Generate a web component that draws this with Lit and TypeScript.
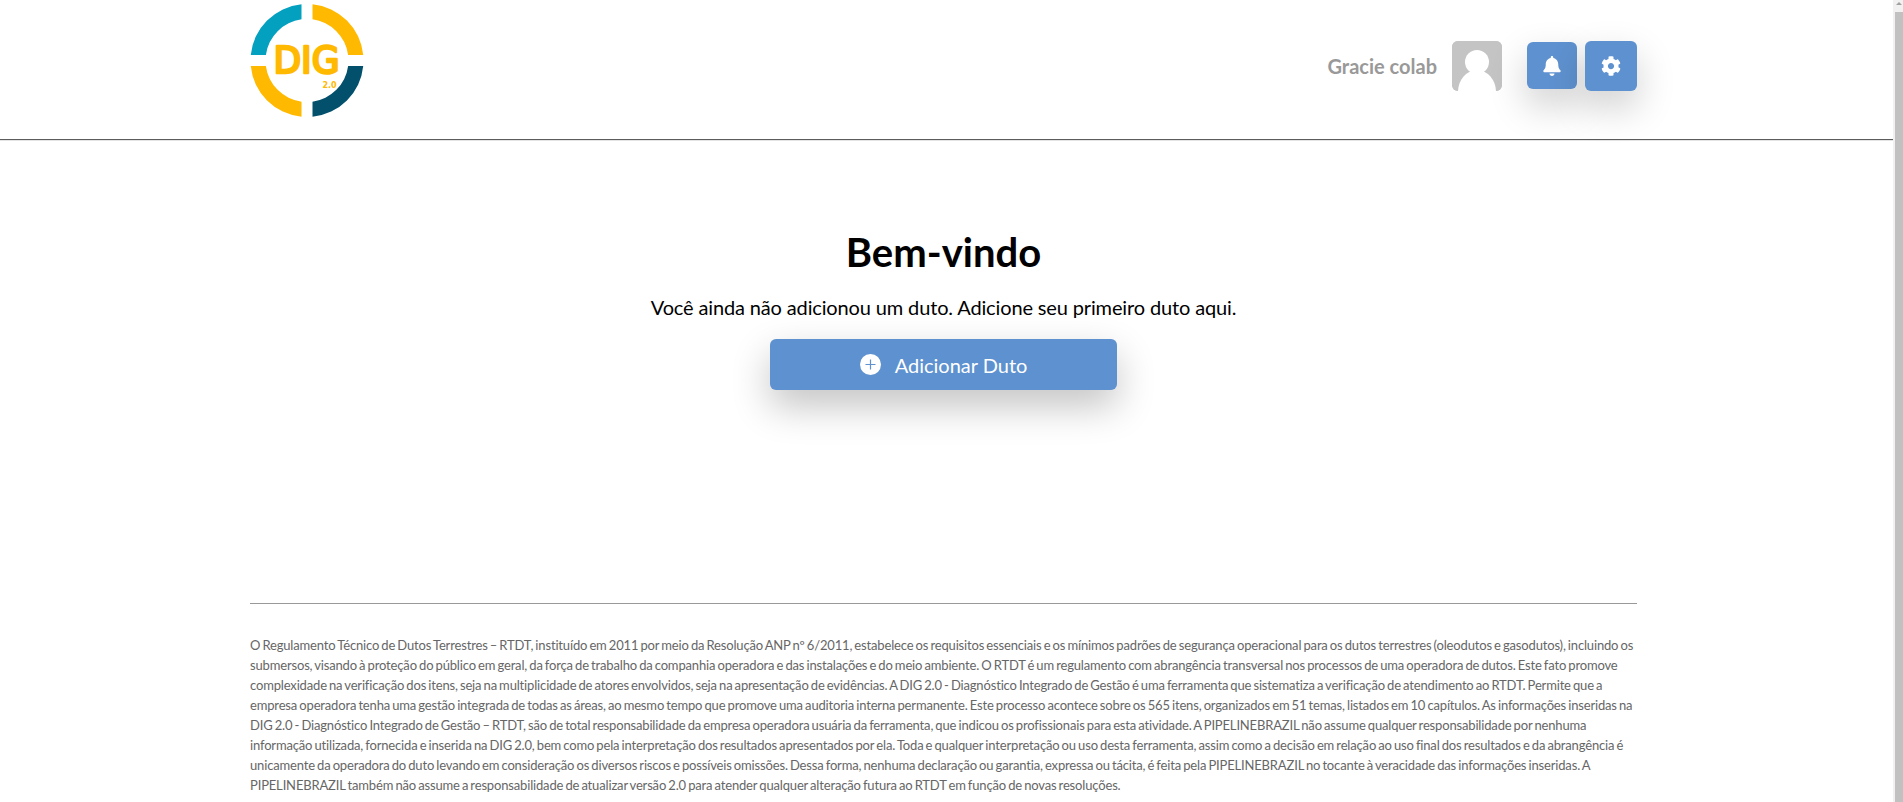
import { LitElement, html, css, svg } from "lit";
import { customElement } from "lit/decorators.js";

const TEXT = "O Regulamento Técnico de Dutos Terrestres – RTDT, instituído em 2011 por meio da Resolução ANP nº 6/2011, estabelece os requisitos essenciais e os mínimos padrões de segurança operacional para os dutos terrestres (oleodutos e gasodutos), incluindo os submersos, visando à proteção do público em geral, da força de trabalho da companhia operadora e das instalações e do meio ambiente. O RTDT é um regulamento com abrangência transversal nos processos de uma operadora de dutos. Este fato promove complexidade na verificação dos itens, seja na multiplicidade de atores envolvidos, seja na apresentação de evidências. A DIG 2.0 - Diagnóstico Integrado de Gestão é uma ferramenta que sistematiza a verificação de atendimento ao RTDT. Permite que a empresa operadora tenha uma gestão integrada de todas as áreas, ao mesmo tempo que promove uma auditoria interna permanente. Este processo acontece sobre os 565 itens, organizados em 51 temas, listados em 10 capítulos. As informações inseridas na DIG 2.0 - Diagnóstico Integrado de Gestão – RTDT, são de total responsabilidade da empresa operadora usuária da ferramenta, que indicou os profissionais para esta atividade. A PIPELINEBRAZIL não assume qualquer responsabilidade por nenhuma informação utilizada, fornecida e inserida na DIG 2.0, bem como pela interpretação dos resultados apresentados por ela. Toda e qualquer interpretação ou uso desta ferramenta, assim como a decisão em relação ao uso final dos resultados e da abrangência é unicamente da operadora do duto levando em consideração os diversos riscos e possíveis omissões. Dessa forma, nenhuma declaração ou garantia, expressa ou tácita, é feita pela PIPELINEBRAZIL no tocante à veracidade das informações inseridas. A PIPELINEBRAZIL também não assume a responsabilidade de atualizar versão 2.0 para atender qualquer alteração futura ao RTDT em função de novas resoluções.";

const SECTOR = "M-5.5 -56.23 A56.5 56.5 0 0 0 -56.23 -5.5 L-41.13 -5.5 A41.5 41.5 0 0 1 -5.5 -41.13 Z";

@customElement("app-root")
export class AppRoot extends LitElement {
  static styles = css`
    :host { display: block; height: 802px; overflow: hidden; position: relative; background: #fff; font-family: Lato, sans-serif; }
    .page { width: 1893px; }
    header { height: 139px; border-bottom: 1px solid #5c5c5c; box-shadow: 0 1px 0 #e4e4e4; box-sizing: content-box; }
    .wrap { width: 1387px; margin-left: 250px; }
    .bar { height: 139px; display: flex; align-items: flex-start; justify-content: space-between; }
    .logo { display: block; width: 116px; height: 120px; margin-top: 1px; }
    .user { display: flex; align-items: flex-start; padding-top: 41px; }
    .name { font-size: 20px; font-weight: 700; color: #999; line-height: 52px; margin-right: 15px; margin-top: -1px; }
    .avatar { width: 50px; height: 50px; border-radius: 6px; background: #c4c4c4; overflow: hidden; margin-right: 25px; display: block; }
    .btn { background: #5e91cf; border-radius: 6px; display: flex; align-items: center; justify-content: center; box-shadow: 0 16px 38px rgba(0,0,0,.2); }
    .bell { width: 50px; height: 47px; margin: 1px 8px 0 0; }
    .gear { width: 52px; height: 50px; }
    main { display: flex; flex-direction: column; align-items: center; padding-top: 88px; height: 463px; box-sizing: border-box; }
    h1 { margin: 0; font-size: 40px; line-height: 48px; font-weight: 700; color: #000; }
    .sub { margin: 16px 0 0; font-size: 20px; letter-spacing: -0.14px; line-height: 30px; color: #000; }
    .add { margin-top: 17px; width: 347px; height: 51px; background: #5e91cf; border: 0; border-radius: 6px; color: #fff; font: 400 20px Lato, sans-serif; display: flex; align-items: center; justify-content: center; gap: 14px; box-shadow: 0 16px 38px rgba(0,0,0,.24); padding: 0; }
    .add svg { display: block; }
    .foot { border-top: 1px solid #999; box-shadow: 0 -1px 0 #fff; padding-top: 31px; }
    .foot p { margin: 0; font-size: 13px; word-spacing: -1px; letter-spacing: -0.16px; line-height: 20px; color: #666; }
    .track { position: absolute; top: 0; right: 0; width: 10px; height: 802px; background: #f1f1f1; }
    .thumb { position: absolute; top: 12px; right: 0; width: 8px; height: 790px; background: #c1c1c1; }
    .arrow { position: absolute; top: 2px; right: 1px; width: 0; height: 0; border-left: 3px solid transparent; border-right: 3px solid transparent; border-bottom: 3px solid #a0a0a0; }
  `;

  private logo() {
    return html`<svg class="logo" viewBox="0 0 116 120">
      <g transform="translate(57 59.500)">
        ${svg`<path d=${SECTOR} fill="#04a0c0"/>`}
        ${svg`<path d=${SECTOR} fill="#ffb900" transform="scale(-1 1)"/>`}
        ${svg`<path d=${SECTOR} fill="#ffb900" transform="scale(1 -1)"/>`}
        ${svg`<path d=${SECTOR} fill="#02506c" transform="scale(-1 -1)"/>`}
      </g>
      <text x="56.500" y="72" text-anchor="middle" font-family="'DejaVu Sans', sans-serif" font-size="38" fill="#ffb900" stroke="#ffb900" stroke-width="2.600" stroke-linejoin="round" textLength="66" lengthAdjust="spacingAndGlyphs">DIG</text>
      <text x="79.500" y="87" text-anchor="middle" font-family="'DejaVu Sans', sans-serif" font-weight="700" font-size="8" fill="#ffb900">2.0</text>
    </svg>`;
  }

  render() {
    return html`
      <div class="page">
        <header><div class="wrap bar">
          ${this.logo()}
          <div class="user">
            <span class="name">Gracie colab</span>
            <svg class="avatar" viewBox="0 0 50 50"><rect width="50" height="50" fill="#c4c4c4"/><circle cx="25" cy="21" r="12" fill="#fff"/><ellipse cx="25" cy="51" rx="19" ry="22" fill="#fff"/></svg>
            <div class="btn bell"><svg width="18" height="20" viewBox="0 0 448 512" fill="#fff"><path d="M224 512c35.3 0 64-28.700 64-64H160c0 35.300 28.700 64 64 64zm215.400-149.700c-19.300-20.800-55.500-52-55.500-154.300 0-77.700-54.500-139.900-127.900-155.200V32c0-17.700-14.300-32-32-32s-32 14.300-32 32v20.800C118.600 68.100 64.100 130.300 64.100 208c0 102.300-36.200 133.500-55.500 154.300-6 6.400-8.700 14.100-8.600 21.700.1 16.400 13 32 32.100 32h383.800c19.100 0 32-15.600 32.100-32 .1-7.600-2.600-15.300-8.600-21.700z"/></svg></div>
            <div class="btn gear"><svg width="20" height="20" viewBox="0 0 512 512" fill="#fff"><path d="M487.400 315.700l-42.600-24.600c4.300-23.200 4.300-47 0-70.200l42.600-24.600c4.900-2.800 7.100-8.600 5.500-14-11.100-35.600-30-67.800-54.700-94.600-3.800-4.100-10-5.100-14.800-2.300L380.800 110c-17.900-15.400-38.500-27.300-60.800-35.100V25.800c0-5.600-3.900-10.500-9.400-11.700-36.700-8.200-74.300-7.800-109.200 0-5.500 1.200-9.400 6.100-9.400 11.700V75c-22.200 7.900-42.800 19.800-60.800 35.100L88.700 85.500c-4.900-2.800-11-1.900-14.800 2.300-24.700 26.700-43.600 58.900-54.700 94.600-1.700 5.400.6 11.200 5.500 14L67.300 221c-4.300 23.200-4.300 47 0 70.200l-42.600 24.600c-4.900 2.800-7.100 8.600-5.500 14 11.100 35.600 30 67.800 54.700 94.600 3.800 4.100 10 5.100 14.800 2.300l42.600-24.600c17.900 15.400 38.500 27.300 60.800 35.100v49.200c0 5.600 3.900 10.500 9.400 11.700 36.700 8.200 74.300 7.800 109.200 0 5.500-1.200 9.400-6.100 9.400-11.700v-49.200c22.200-7.900 42.800-19.800 60.800-35.100l42.600 24.600c4.900 2.800 11 1.900 14.800-2.300 24.700-26.700 43.600-58.900 54.700-94.600 1.500-5.500-.7-11.300-5.600-14.100zM256 336c-44.100 0-80-35.900-80-80s35.900-80 80-80 80 35.900 80 80-35.900 80-80 80z"/></svg></div>
          </div>
        </div></header>
        <main class="wrap">
          <h1>Bem-vindo</h1>
          <p class="sub">Você ainda não adicionou um duto. Adicione seu primeiro duto aqui.</p>
          <button class="add">
            <svg width="21" height="21" viewBox="0 0 21 21"><circle cx="10.500" cy="10.500" r="10.500" fill="#fff"/><path d="M10.500 5.500v10M5.500 10.500h10" stroke="#5e91cf" stroke-width="1.200"/></svg>
            <span>Adicionar Duto</span>
          </button>
        </main>
        <div class="wrap foot"><p>${TEXT}</p></div>
      </div>
      <div class="track"></div><div class="thumb"></div><div class="arrow"></div>
    `;
  }
}
